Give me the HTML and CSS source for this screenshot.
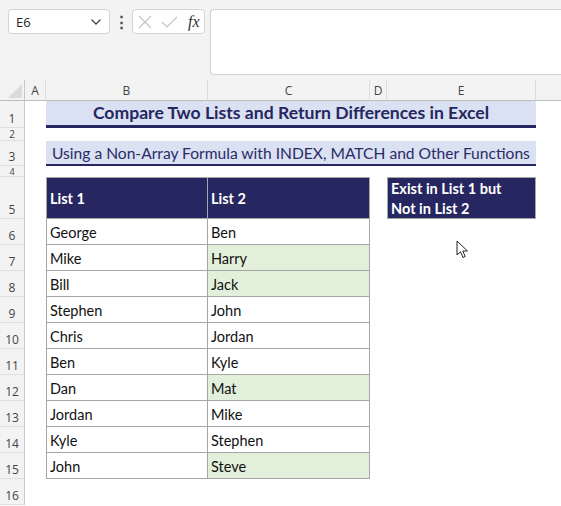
FILE: index.html
```html
<!DOCTYPE html>
<html lang="en">
<head>
  <meta charset="UTF-8">
  <title>Compare Two Lists</title>
  <link rel="stylesheet" href="styles.css">
</head>
<body>

  <!-- Formula bar -->
  <div class="toolbar">
    <div class="namebox">
      <span>E6</span>
      <svg width="12" height="8" viewBox="0 0 12 8"><path d="M1.5 1.5 L6 6 L10.5 1.5" fill="none" stroke="#444" stroke-width="1.3"/></svg>
    </div>
    <div class="dots">⋮</div>
    <div class="fxbox">
      <svg width="14" height="14" viewBox="0 0 14 14"><path d="M1 1 L13 13 M13 1 L1 13" stroke="#c4c4c4" stroke-width="1.2"/></svg>
      <svg width="17" height="14" viewBox="0 0 17 14"><path d="M1 7 L6 12 L16 2" fill="none" stroke="#c4c4c4" stroke-width="1.2"/></svg>
      <span class="fx">fx</span>
    </div>
    <div class="formula"></div>
  </div>

  <!-- Sheet -->
  <div class="sheet">
    <div class="corner"><svg width="14" height="14" viewBox="0 0 14 14"><path d="M14 0 L14 14 L0 14 Z" fill="#dadada"/></svg></div>
    <div class="colhead">A</div>
    <div class="colhead">B</div>
    <div class="colhead">C</div>
    <div class="colhead">D</div>
    <div class="colhead">E</div>
    <div class="colhead blank"></div>

    <!-- row 1 -->
    <div class="rowhead">1</div>
    <div></div>
    <div class="title">Compare Two Lists and Return Differences in Excel</div>
    <div></div>

    <!-- row 2 -->
    <div class="rowhead small">2</div>
    <div class="fill6"></div>

    <!-- row 3 -->
    <div class="rowhead">3</div>
    <div></div>
    <div class="subtitle">Using a Non-Array Formula with INDEX, MATCH and Other Functions</div>
    <div></div>

    <!-- row 4 -->
    <div class="rowhead small tiny">4</div>
    <div class="fill6"></div>

    <!-- row 5 -->
    <div class="rowhead">5</div>
    <div></div>
    <div class="th first">List 1</div>
    <div class="th">List 2</div>
    <div></div>
    <div class="th result">Exist in List 1 but<br>Not in List 2</div>
    <div></div>

    <!-- rows 6-15 -->
    <div class="rowhead">6</div><div></div><div class="td first">George</div><div class="td">Ben</div><div class="fill3"></div>
    <div class="rowhead">7</div><div></div><div class="td first">Mike</div><div class="td new">Harry</div><div class="fill3"></div>
    <div class="rowhead">8</div><div></div><div class="td first">Bill</div><div class="td new">Jack</div><div class="fill3"></div>
    <div class="rowhead">9</div><div></div><div class="td first">Stephen</div><div class="td">John</div><div class="fill3"></div>
    <div class="rowhead">10</div><div></div><div class="td first">Chris</div><div class="td">Jordan</div><div class="fill3"></div>
    <div class="rowhead">11</div><div></div><div class="td first">Ben</div><div class="td">Kyle</div><div class="fill3"></div>
    <div class="rowhead">12</div><div></div><div class="td first">Dan</div><div class="td new">Mat</div><div class="fill3"></div>
    <div class="rowhead">13</div><div></div><div class="td first">Jordan</div><div class="td">Mike</div><div class="fill3"></div>
    <div class="rowhead">14</div><div></div><div class="td first">Kyle</div><div class="td">Stephen</div><div class="fill3"></div>
    <div class="rowhead">15</div><div></div><div class="td first">John</div><div class="td new">Steve</div><div class="fill3"></div>
    <div class="rowhead">16</div><div class="fill6"></div>
  </div>

  <!-- mouse pointer -->
  <svg class="pointer" width="14" height="20" viewBox="0 0 14 20">
    <path d="M1 1 L1 15 L4.5 11.8 L7 17.5 L9.2 16.5 L6.8 11 L11.5 11 Z" fill="#fff" stroke="#222" stroke-width="1" stroke-linejoin="round"/>
  </svg>

</body>
</html>
```

FILE: styles.css
```css
* { box-sizing: border-box; margin: 0; padding: 0; }
body { width: 561px; height: 506px; overflow: hidden; background: #fff; font-family: Lato, "Open Sans", sans-serif; position: relative; }

/* Formula bar */
.toolbar {
  height: 80px; background: #f3f3f3; display: flex; align-items: flex-start;
  padding: 9px 0 0 8px;
}
.namebox {
  width: 102px; height: 25px; background: #fff; border: 1px solid #d4d4d4; border-radius: 4px;
  display: flex; align-items: center; justify-content: space-between; padding: 0 7px 0 7px;
  font-family: "Open Sans", sans-serif; font-size: 13px; color: #222;
}
.dots { width: 22px; text-align: center; font-size: 15px; font-weight: bold; color: #444; line-height: 25px; }
.fxbox {
  width: 73px; height: 25px; background: #fff; border: 1px solid #d4d4d4; border-radius: 4px;
  display: flex; align-items: center; gap: 9px; padding-left: 5px;
}
.fx { font-family: "Liberation Serif", serif; font-style: italic; font-size: 16px; color: #333; margin-left: 1px; }
.formula {
  flex: 1; height: 66px; margin-left: 5px; background: #fff;
  border: 1px solid #d0d0d0; border-right: none; border-radius: 4px 0 0 4px;
}

/* Sheet grid */
.sheet {
  display: grid;
  grid-template-columns: 25px 21px 162px 162px 17px 149px 1fr;
  grid-template-rows: 21px 27px 13px 25px 11px 42px repeat(11, 26px);
}
.corner { background: #f3f3f3; border-right: 1px solid #c8c8c8; border-bottom: 1px solid #bdbdbd; display: flex; align-items: flex-end; justify-content: flex-end; padding: 0 2px 2px 0; }
.colhead {
  background: #f3f3f3; border-bottom: 1px solid #bdbdbd; border-right: 1px solid #dcdcdc;
  font-family: "Open Sans", sans-serif; font-size: 12px; color: #444;
  display: flex; align-items: center; justify-content: center;
}
.colhead.blank { border-right: none; }
.rowhead {
  background: #f3f3f3; border-right: 1px solid #c8c8c8; border-bottom: 1px solid #dedede;
  font-family: "Open Sans", sans-serif; font-size: 12px; color: #444;
  display: flex; align-items: flex-end; justify-content: center; padding-bottom: 2px; line-height: 1;
}
.rowhead.small { padding-bottom: 0; align-items: center; font-size: 10px; line-height: 10px; }
.rowhead.tiny { font-size: 9px; line-height: 9px; }
.fill6 { grid-column: span 6; }
.fill3 { grid-column: span 3; }

.title {
  grid-column: span 4; background: #d9e1f2; border-bottom: 3px solid #262660;
  color: #262660; font-weight: bold; font-size: 17.6px; text-align: center; line-height: 24px;
  white-space: nowrap;
}
.subtitle {
  grid-column: span 4; background: #d9e1f2; border-bottom: 2px solid #262660;
  color: #2b2b66; font-size: 15.6px; padding-left: 6px; line-height: 24px; white-space: nowrap;
}

/* List table */
.th, .td {
  border-right: 1px solid #a6a6a6; border-bottom: 1px solid #a6a6a6;
  display: flex; align-items: center; padding-left: 3px; font-size: 14.5px;
}
.first { border-left: 1px solid #a6a6a6; }
.th { background: #262660; color: #fff; font-weight: bold; border-top: 1px solid #a6a6a6; }
.th.result { border-left: 1px solid #a6a6a6; line-height: 20px; padding-top: 1px; }
.td { color: #111; padding-top: 2px; }
.td.new { background: #e2efda; }

.pointer { position: absolute; left: 456px; top: 240px; }
```
